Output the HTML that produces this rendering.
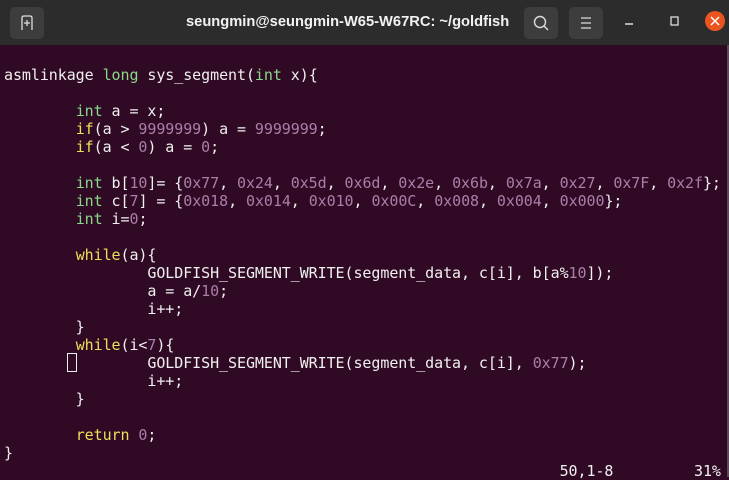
<!DOCTYPE html>
<html><head><meta charset="utf-8"><style>
*{margin:0;padding:0;box-sizing:border-box}
body{width:729px;height:477px;overflow:hidden;background:#300a24;position:relative;font-family:"DejaVu Sans Mono","Liberation Mono",monospace}
.tb{position:absolute;left:0;top:0;width:729px;height:45px;background:#2c2c2c}
.btn{position:absolute;top:7px;width:34px;height:32px;background:#3d3d3d;border-radius:5px}
.title{position:absolute;left:186px;top:14px;color:#f2f2f2;font:bold 14.7px "Liberation Sans",sans-serif;white-space:nowrap}
.code{position:absolute;left:4px;top:66px;color:#f0f0f0;font-size:15px;line-height:18px;white-space:pre;letter-spacing:-0.07px}
.g{color:#8ad88a}.y{color:#ebe05a}.p{color:#a97fa8}
.cur{position:absolute;left:67px;top:353px;width:10px;height:19px;border:1.5px solid #eee}
</style></head><body>
<div class="tb">
<div class="btn" style="left:10px"><svg width="34" height="32"><path d="M12 23V11q0-2 2-2h6q2 0 2 2v12M14 16h6M17 13v6" stroke="#ddd" stroke-width="1.3" fill="none"/></svg></div>
<div class="title">seungmin@seungmin-W65-W67RC: ~/goldfish</div>
<div class="btn" style="left:524px"><svg width="34" height="32"><circle cx="16" cy="15" r="5.5" stroke="#ddd" stroke-width="1.4" fill="none"/><path d="M20 19l4 4" stroke="#ddd" stroke-width="1.4"/></svg></div>
<div class="btn" style="left:569px"><svg width="34" height="32"><path d="M12 11h10M12 16h10M12 21h10" stroke="#ddd" stroke-width="1.3"/></svg></div>
<svg style="position:absolute;left:620px;top:10px" width="109" height="26"><path d="M5 14h8" stroke="#ddd" stroke-width="1.5"/><rect x="51" y="7" width="7" height="8" stroke="#ddd" stroke-width="1.3" fill="none"/><circle cx="95" cy="11" r="10" fill="#e95420"/><path d="M91 7l8 8M99 7l-8 8" stroke="#fff" stroke-width="1.5"/></svg>
</div>
<div style="position:absolute;left:727px;top:45px;width:2px;height:432px;background:#5a4a55"></div>
<div class="code">asmlinkage <span class="g">long</span> sys_segment(<span class="g">int</span> x){

        <span class="g">int</span> a = x;
        <span class="y">if</span>(a &gt; <span class="p">9999999</span>) a = <span class="p">9999999</span>;
        <span class="y">if</span>(a &lt; <span class="p">0</span>) a = <span class="p">0</span>;

        <span class="g">int</span> b[<span class="p">10</span>]= {<span class="p">0x77</span>, <span class="p">0x24</span>, <span class="p">0x5d</span>, <span class="p">0x6d</span>, <span class="p">0x2e</span>, <span class="p">0x6b</span>, <span class="p">0x7a</span>, <span class="p">0x27</span>, <span class="p">0x7F</span>, <span class="p">0x2f</span>};
        <span class="g">int</span> c[<span class="p">7</span>] = {<span class="p">0x018</span>, <span class="p">0x014</span>, <span class="p">0x010</span>, <span class="p">0x00C</span>, <span class="p">0x008</span>, <span class="p">0x004</span>, <span class="p">0x000</span>};
        <span class="g">int</span> i=<span class="p">0</span>;

        <span class="y">while</span>(a){
                GOLDFISH_SEGMENT_WRITE(segment_data, c[i], b[a%<span class="p">10</span>]);
                a = a/<span class="p">10</span>;
                i++;
        }
        <span class="y">while</span>(i&lt;<span class="p">7</span>){
                GOLDFISH_SEGMENT_WRITE(segment_data, c[i], <span class="p">0x77</span>);
                i++;
        }

        <span class="y">return</span> <span class="p">0</span>;
}
                                                              50,1-8         31%</div>
<div class="cur"></div>
</body></html>
